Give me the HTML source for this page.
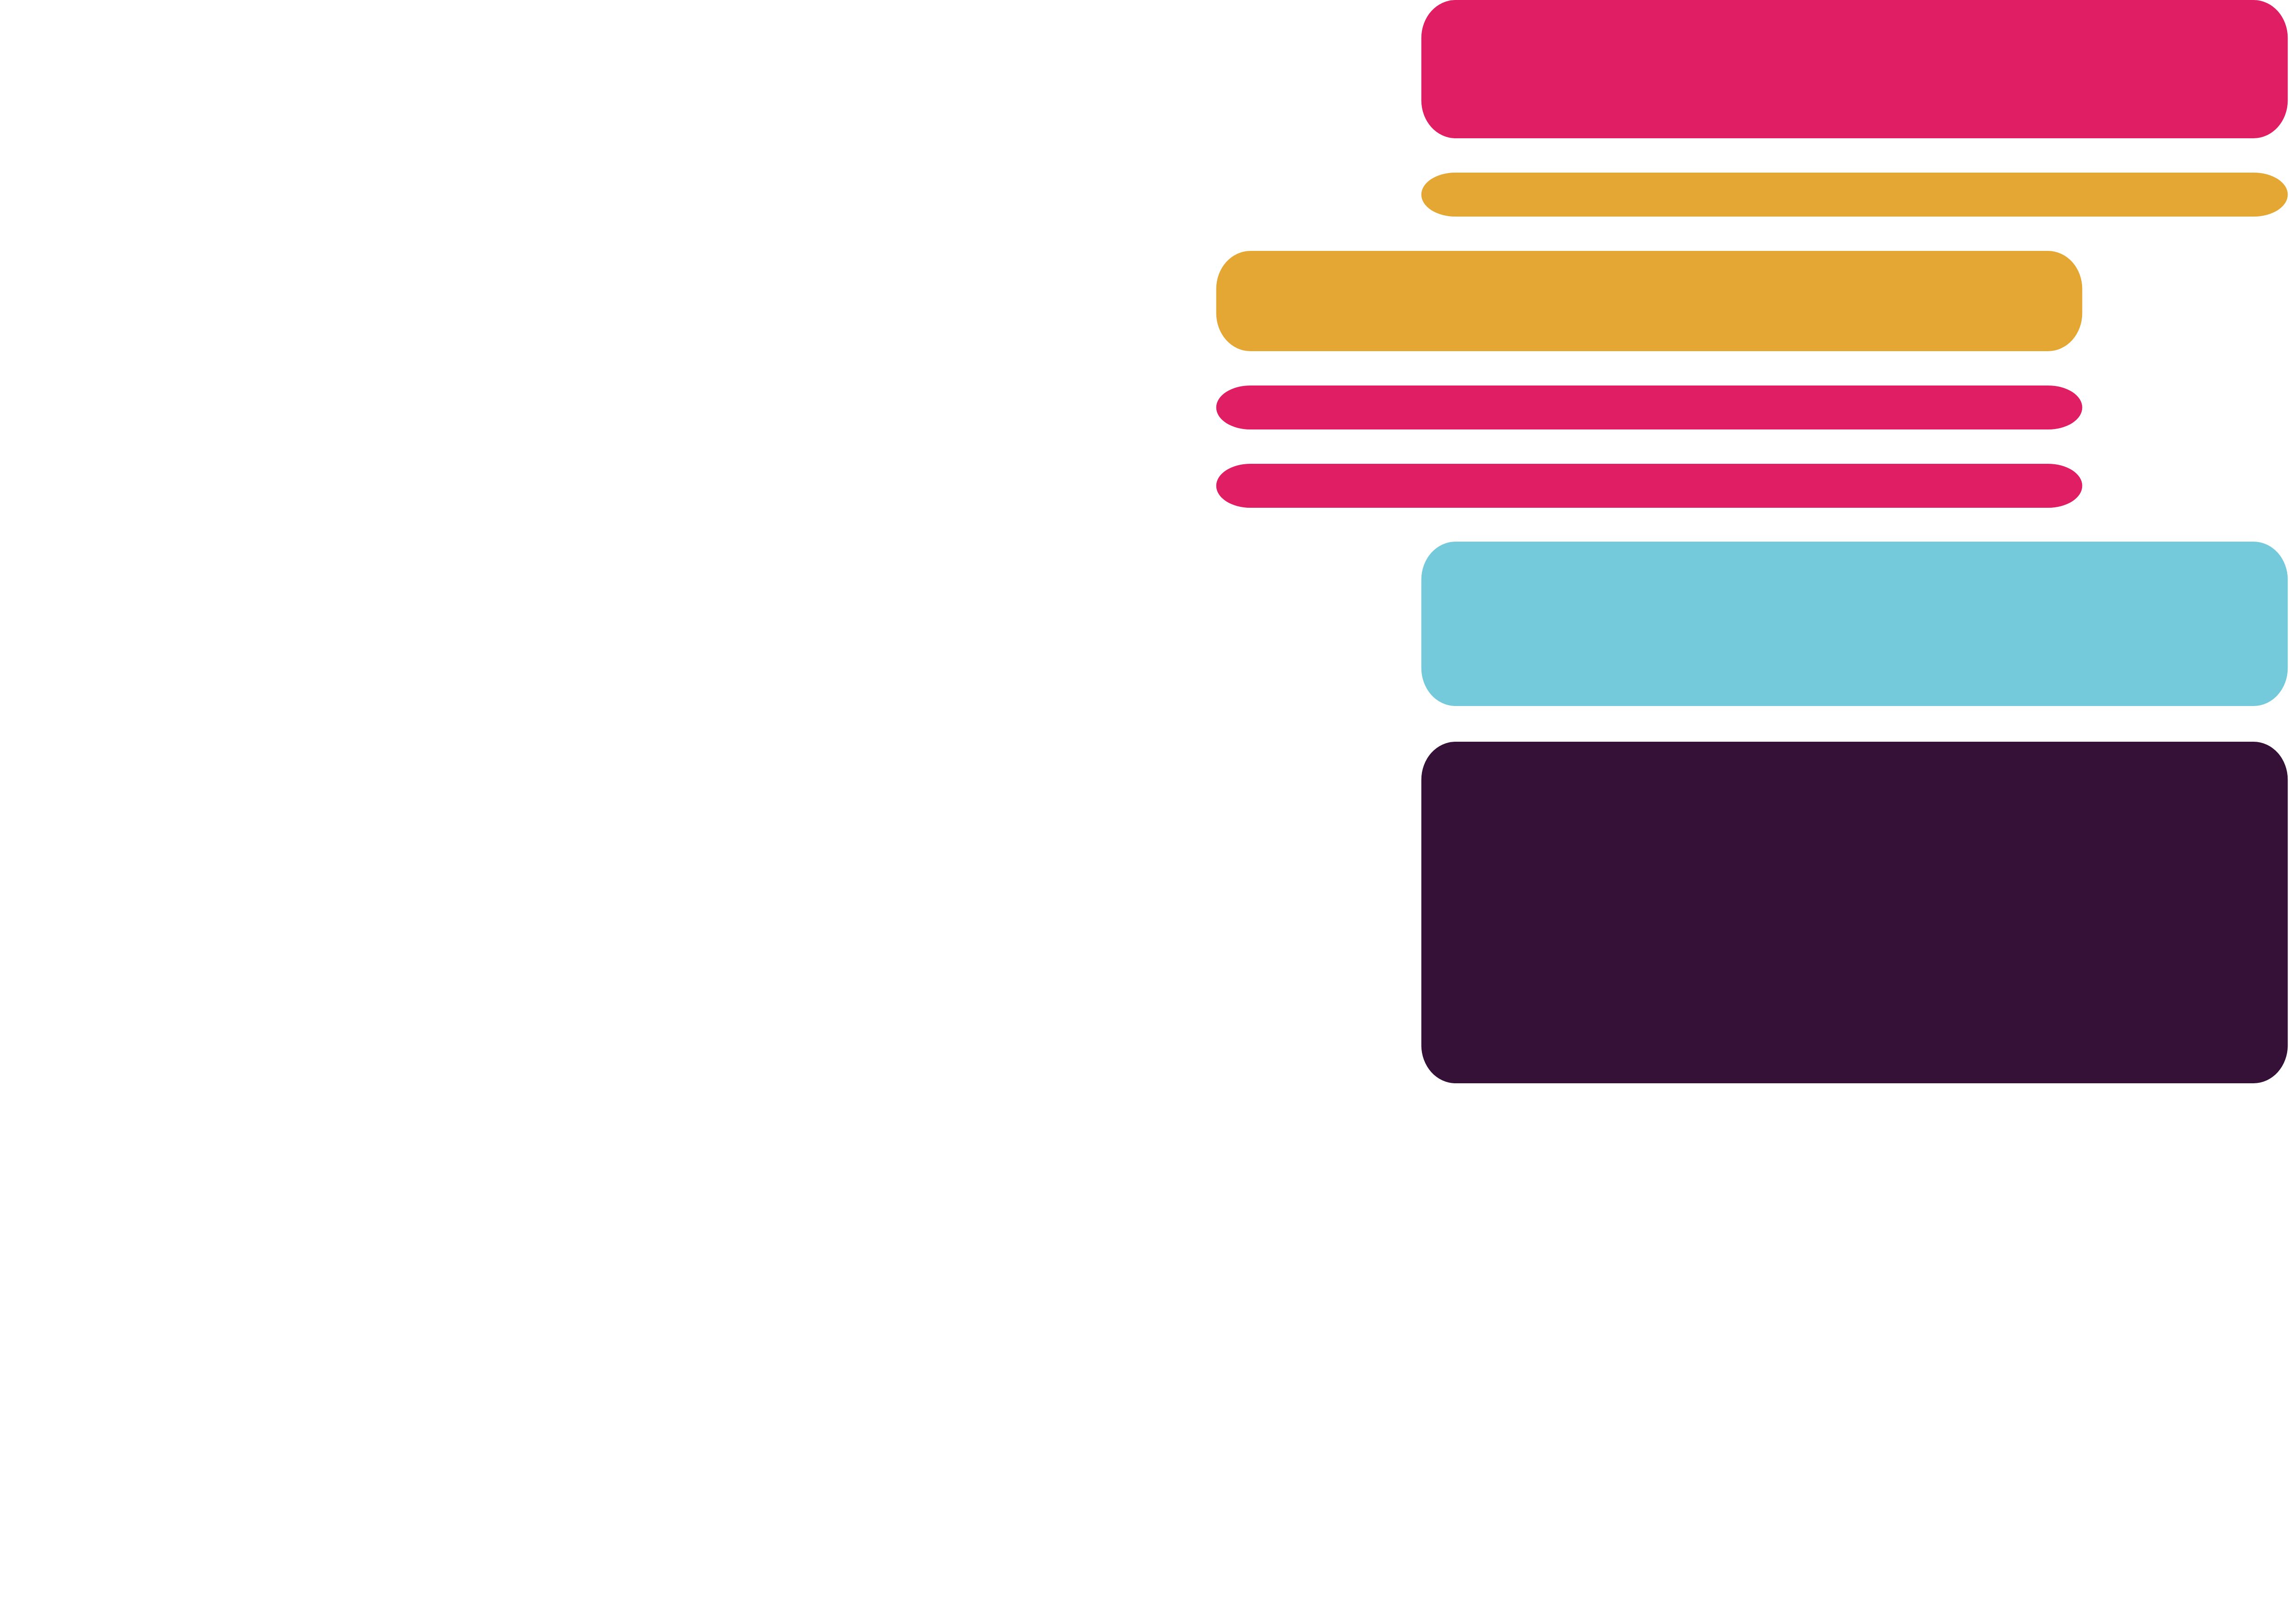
<!DOCTYPE html>
<html><head><meta charset="utf-8"><style>
html,body{margin:0;padding:0;background:#fff;width:100%;height:100%;overflow:hidden;}
svg{position:absolute;left:0;top:0;width:100vw;height:100vh;display:block;}
</style></head><body>
<svg viewBox="0 0 5569 3547" preserveAspectRatio="none" xmlns="http://www.w3.org/2000/svg">
<rect x="0" y="0" width="5569" height="3547" fill="#fff"/>
<rect x="3458" y="0" width="2108" height="302" rx="83" ry="83" fill="#df1e63"/>
<rect x="3458" y="377" width="2108" height="96" rx="83" ry="48" fill="#e5a734"/>
<rect x="2959" y="548" width="2107" height="219" rx="83" ry="83" fill="#e5a734"/>
<rect x="2959" y="842" width="2107" height="96" rx="83" ry="48" fill="#df1e63"/>
<rect x="2959" y="1013" width="2107" height="96" rx="83" ry="48" fill="#df1e63"/>
<rect x="3458" y="1183" width="2108" height="359" rx="83" ry="83" fill="#74cadb"/>
<rect x="3458" y="1620" width="2108" height="746" rx="83" ry="83" fill="#351138"/>
</svg>
</body></html>
